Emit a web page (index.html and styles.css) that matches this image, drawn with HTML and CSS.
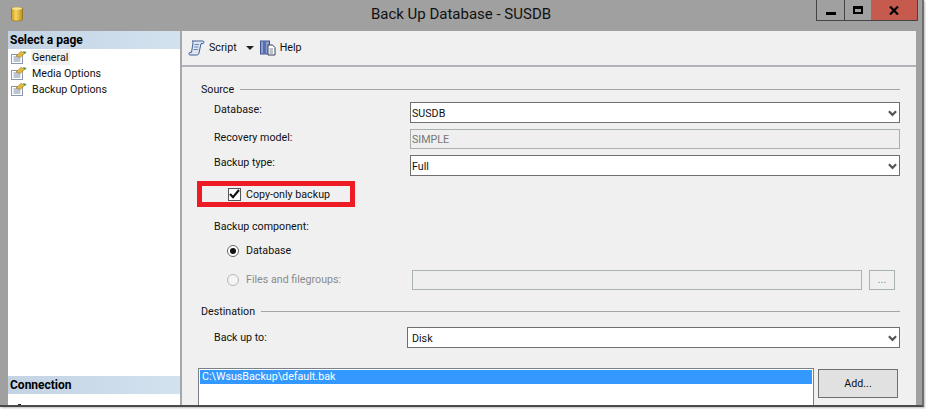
FILE: index.html
```html
<!DOCTYPE html>
<html lang="en">
<head>
<meta charset="utf-8">
<title>Back Up Database - SUSDB</title>
<link rel="stylesheet" href="styles.css">
</head>
<body>
<div class="window">
  <header class="titlebar">
    <svg class="appicon" width="12" height="16" viewBox="0 0 12 16"><defs><linearGradient id="db" x1="0" x2="1" y1="0" y2="0"><stop offset="0" stop-color="#c99a1e"/><stop offset=".4" stop-color="#f5d662"/><stop offset="1" stop-color="#c08f14"/></linearGradient></defs><path d="M.5 2.5C.5 1 11.5 1 11.5 2.5V13.500C11.500 15.500 .5 15.500 .5 13.500Z" fill="url(#db)" stroke="#8a6a10" stroke-width=".6"/><ellipse cx="6" cy="2.600" rx="5" ry="1.400" fill="#f8e48c"/></svg>
    <h1 class="title">Back Up Database - SUSDB</h1>
    <div class="winbtns">
      <span class="wb wb-min"><i></i></span>
      <span class="wb wb-max"><i></i></span>
      <span class="wb wb-close"><svg width="10" height="9" viewBox="0 0 10 9"><path d="M1 .5 9 8.500M9 .5 1 8.500" stroke="#000" stroke-width="2.200" fill="none"/></svg></span>
    </div>
  </header>
  <div class="client">
    <aside class="side">
      <div class="sidehead">Select a page</div>
      <ul class="pages">
        <li class="page"><svg class="pageicon" width="16" height="14" viewBox="0 0 16 14"><use href="#pg"/></svg><span class="pagename current">General</span></li>
        <li class="page"><svg class="pageicon" width="16" height="14" viewBox="0 0 16 14"><use href="#pg"/></svg><span class="pagename">Media Options</span></li>
        <li class="page"><svg class="pageicon" width="16" height="14" viewBox="0 0 16 14"><use href="#pg"/></svg><span class="pagename">Backup Options</span></li>
      </ul>
      <div class="sidehead conn">Connection</div>
      <span class="cutoff"></span>
    </aside>
    <main class="main">
      <div class="toolbar">
        <svg class="tbicon" width="17" height="16" viewBox="0 0 17 16"><path d="M4 1H15C16 1 16.400 3 15 3.600H13L11 13C10.800 14.600 9.500 15 8.500 15H2C.6 15 .4 12.600 2 12.400H3.500L5 3C5 2 4.600 1 4 1Z" fill="#dfe6f2" stroke="#3f5f96" stroke-width="1"/><path d="M6.500 4.500H11M6 7H10.500M5.500 9.500H10" stroke="#6d86b0"/></svg>
        <span class="tbtext">Script</span>
        <span class="caret"></span>
        <svg class="tbicon help" width="16" height="16" viewBox="0 0 16 16"><rect x=".5" y="1" width="9" height="13" fill="#8d9fd0" stroke="#3d5590"/><rect x="3" y="1" width="3" height="13" fill="#5a70ad"/><path d="M8 5H12.500L15 7.500V15H8Z" fill="#fff" stroke="#333c55"/><path d="M9.500 9H13M9.500 11H13M9.500 13H13" stroke="#7a8296"/></svg>
        <span class="tbtext">Help</span>
      </div>
      <form class="form">
        <div class="legend first"><span>Source</span><hr></div>
        <div class="row r-db"><label>Database:</label><span class="select"><span>SUSDB</span><svg class="chev" width="9" height="7" viewBox="0 0 10 7"><path d="M1 1 5 5 9 1" fill="none" stroke="#555" stroke-width="2.400"/></svg></span></div>
        <div class="row r-rec"><label>Recovery model:</label><span class="select disabled"><span>SIMPLE</span></span></div>
        <div class="row r-type"><label>Backup type:</label><span class="select"><span>Full</span><svg class="chev" width="9" height="7" viewBox="0 0 10 7"><path d="M1 1 5 5 9 1" fill="none" stroke="#555" stroke-width="2.400"/></svg></span></div>
        <div class="check">
          <span class="checkbox"><svg width="11" height="10" viewBox="0 0 11 10"><path d="M1 5 4 8.200 10 1" fill="none" stroke="#111" stroke-width="2.200"/></svg></span>
          <span>Copy-only backup</span>
          <span class="highlight"></span>
        </div>
        <div class="sublabel">Backup component:</div>
        <div class="radio r-one"><span class="dot on"></span><span>Database</span></div>
        <div class="radio r-two off">
          <span class="dot"></span><span class="radiotext">Files and filegroups:</span>
          <span class="filebox"></span><span class="browse">...</span>
        </div>
        <div class="legend dest"><span>Destination</span><hr></div>
        <div class="row r-to"><label>Back up to:</label><span class="select wide"><span>Disk</span><svg class="chev" width="9" height="7" viewBox="0 0 10 7"><path d="M1 1 5 5 9 1" fill="none" stroke="#555" stroke-width="2.400"/></svg></span></div>
        <div class="listrow">
          <div class="list"><div class="listitem">C:\WsusBackup\default.bak</div></div>
          <span class="addbtn">Add...</span>
        </div>
      </form>
    </main>
  </div>
</div>
<svg class="defs" width="0" height="0"><defs><g id="pg"><rect x=".5" y="4.500" width="11" height="9" fill="#fff" stroke="#8b97ad"/><path d="M2.500 7H9.500M2.500 9H9.500M2.500 11H9.500" stroke="#7c8cab"/><path d="M5 6 10 1.500 14 3 9 7.500Z" fill="#e8b93a" stroke="#96761c" stroke-width=".6"/><path d="M12 1 15.500 2 14 4Z" fill="#3c9a3c"/></g></defs></svg>
</body>
</html>
```
FILE: styles.css
```css
* { box-sizing: border-box; }
html, body { margin: 0; padding: 0; }
body { width: 926px; height: 409px; overflow: hidden; background: #fff; font-family: Roboto, "Open Sans", sans-serif; font-size: 10.7px; color: #111; }
.window { width: 924px; height: 407px; background: #a0a0a0; border-right: 2px solid #6e6e6e; border-bottom: 2px solid #4a4a4a; display: flex; flex-direction: column; padding-left: 8px; padding-right: 6px; box-shadow: 1px 1px 2px #bbb; overflow: hidden; }
.titlebar { height: 31px; flex: none; display: flex; position: relative; align-items: flex-start; justify-content: center; }
.appicon { position: absolute; left: 3px; top: 6px; }
.title { margin: 5px 2px 0 0; font-size: 15px; line-height: 19px; font-weight: 400; color: #111; }
.winbtns { position: absolute; right: -2px; top: 0; display: flex; height: 21px; border: 1px solid #444; border-top: 0; }
.wb { display: flex; align-items: center; justify-content: center; height: 100%; background: #a0a0a0; }
.wb-min { width: 28px; border-right: 1px solid #444; align-items: flex-end; padding-bottom: 5px; }
.wb-min i { display: block; width: 10px; height: 3px; background: #000; }
.wb-max { width: 26px; }
.wb-max i { display: block; width: 10px; height: 8px; border: 2px solid #000; border-top-width: 3px; margin-bottom: 1px; }
.wb-close { width: 46px; background: #c75a4f; }
.client { flex: 1; display: flex; background: #fff; min-height: 0; }
.side { width: 174px; flex: none; background: #fff; display: flex; flex-direction: column; border-right: 2px solid #a8a8a8; }
.sidehead { height: 18px; line-height: 19px; padding-left: 2px; font-weight: 700; font-size: 12px; color: #000; background: linear-gradient(90deg, #c3d3e3, #d3e2ef); flex: none; }
.pages { list-style: none; margin: 0; padding: 0 0 0 3px; height: 327px; flex: none; }
.page { height: 16px; display: flex; align-items: center; gap: 5px; line-height: 14px; white-space: nowrap; }
.pagename { padding: 0 2px 0 1px; margin-left: -1px; height: 15px; line-height: 15px; }
.pagename.current { background: #f1f1f1; }
.cutoff { display: block; width: 3px; height: 1px; margin: 10px 0 0 10px; background: #222; flex: none; }
.main { flex: 1; background: #f0f0f0; display: flex; flex-direction: column; min-width: 0; }
.toolbar { height: 36px; flex: none; display: flex; align-items: center; padding-left: 6px; border-bottom: 2px solid #b0b3bb; padding-bottom: 1px; }
.tbtext { margin-left: 4px; }
.caret { margin-left: 9px; width: 0; height: 0; border-left: 4px solid transparent; border-right: 4px solid transparent; border-top: 4px solid #222; }
.help { margin-left: 6px; }
.form { flex: 1; padding-left: 19px; display: flex; flex-direction: column; min-height: 0; }
.legend { display: flex; align-items: center; gap: 6px; height: 16px; width: 699px; }
.legend.first { margin-top: 14px; }
.legend hr { flex: 1; margin: 0; border: 0; height: 1px; background: #a5a5a5; }
.row { display: flex; padding-left: 13px; width: 699px; }
.row label { width: 196px; flex: none; line-height: 14px; }
.select { flex: 1; height: 21px; background: #fff; border: 1px solid #6f6f6f; display: flex; align-items: center; justify-content: space-between; padding: 1px 2px 0 1px; }
.select.wide { margin-left: -3px; padding-left: 4px; }
.select.disabled { background: #efefef; border-color: #a8b0b0; color: #777; height: 20px; }
.chev { flex: none; }
.r-db { margin-top: 5px; height: 21px; }
.r-db label { padding-top: 1px; }
.r-rec { margin-top: 6px; height: 20px; }
.r-rec label { padding-top: 2px; }
.r-type { margin-top: 6px; height: 21px; }
.r-type label { padding-top: 1px; }
.check { display: flex; align-items: center; position: relative; width: 158px; height: 26px; margin: 5px 0 0 -4px; padding-left: 31px; gap: 5px; }
.checkbox { width: 13px; height: 13px; border: 1px solid #555; background: #fff; display: flex; align-items: center; justify-content: center; }
.highlight { position: absolute; inset: 0; border: 5px solid #ed1c24; }
.sublabel { margin: 12px 0 0 13px; line-height: 15px; }
.radio { display: flex; align-items: center; padding-left: 26px; gap: 7px; width: 699px; }
.r-one { margin-top: 9px; height: 15px; }
.r-two { margin-top: 10px; height: 24px; color: #8a8a8a; position: relative; }
.dot { width: 12px; height: 12px; border-radius: 50%; border: 1px solid #666; background: #fff; display: flex; align-items: center; justify-content: center; flex: none; }
.dot.on::after { content: ""; width: 6px; height: 6px; border-radius: 50%; background: #111; }
.off .dot { border-color: #b5b5b5; background: #f4f4f4; }
.radiotext { width: 159px; flex: none; padding-bottom: 1px; }
.filebox { width: 450px; height: 20px; border: 1px solid #a9b1b1; background: #efefef; flex: none; }
.browse { width: 26px; height: 20px; border: 1px solid #a9b1b1; flex: none; text-align: center; line-height: 17px; color: #888; }
.legend.dest { margin-top: 11px; }
.r-to { margin-top: 8px; height: 21px; }
.r-to label { padding-top: 4px; }
.listrow { display: flex; margin: 20px 0 0 -3px; flex: 1; min-height: 0; align-items: flex-start; }
.list { width: 616px; height: 40px; border: 1px solid #7a7f88; background: #fff; padding: 1px; }
.listitem { background: #3399ff; color: #fff; height: 14px; line-height: 13px; padding-left: 2px; }
.addbtn { width: 80px; height: 29px; margin-left: 4px; margin-top: 1px; border: 1px solid #6f6f6f; background: #e1e1e1; display: flex; align-items: center; justify-content: center; }
.defs { position: absolute; }
```
